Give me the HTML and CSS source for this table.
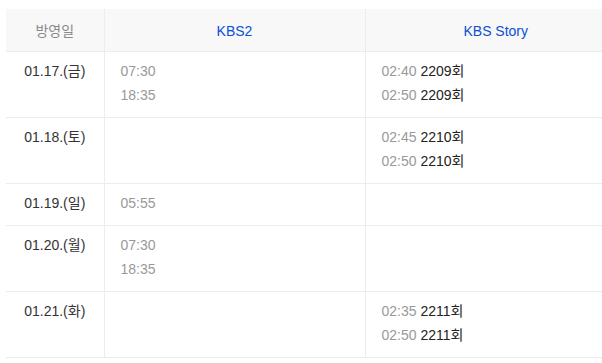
FILE: index.html
```html
<!DOCTYPE html>
<html lang="ko">
<head>
<meta charset="utf-8">
<link rel="stylesheet" href="styles.css">
</head>
<body>
<table class="sched">
  <colgroup>
    <col class="c-date">
    <col class="c-ch1">
    <col class="c-ch2">
  </colgroup>
  <thead>
    <tr>
      <th class="h-date">방영일</th>
      <th class="h-ch">KBS2</th>
      <th class="h-ch">KBS Story</th>
    </tr>
  </thead>
  <tbody>
    <tr>
      <td class="date">01.17.(금)</td>
      <td class="slot"><div class="ln"><span class="tm">07:30</span></div><div class="ln"><span class="tm">18:35</span></div></td>
      <td class="slot"><div class="ln"><span class="tm">02:40</span> <span class="ep">2209회</span></div><div class="ln"><span class="tm">02:50</span> <span class="ep">2209회</span></div></td>
    </tr>
    <tr>
      <td class="date">01.18.(토)</td>
      <td class="slot"></td>
      <td class="slot"><div class="ln"><span class="tm">02:45</span> <span class="ep">2210회</span></div><div class="ln"><span class="tm">02:50</span> <span class="ep">2210회</span></div></td>
    </tr>
    <tr>
      <td class="date">01.19.(일)</td>
      <td class="slot"><div class="ln"><span class="tm">05:55</span></div></td>
      <td class="slot"></td>
    </tr>
    <tr>
      <td class="date">01.20.(월)</td>
      <td class="slot"><div class="ln"><span class="tm">07:30</span></div><div class="ln"><span class="tm">18:35</span></div></td>
      <td class="slot"></td>
    </tr>
    <tr>
      <td class="date">01.21.(화)</td>
      <td class="slot"></td>
      <td class="slot"><div class="ln"><span class="tm">02:35</span> <span class="ep">2211회</span></div><div class="ln"><span class="tm">02:50</span> <span class="ep">2211회</span></div></td>
    </tr>
  </tbody>
</table>
</body>
</html>
```
FILE: styles.css
```css
html, body {
  margin: 0;
  padding: 0;
  background: #fff;
  overflow: hidden;
}
body {
  padding: 9px 0 0 6px;
  font-family: "Liberation Sans", Arial, "Noto Sans CJK KR", sans-serif;
  font-size: 14px;
  color: #333;
}
.sched {
  width: 620px;
  border-collapse: collapse;
  table-layout: fixed;
}
.c-date { width: 98px; }
.c-ch1 { width: 261px; }
.c-ch2 { width: 261px; }
.sched th,
.sched td {
  padding: 7px 16px 10px;
  line-height: 24px;
  border-bottom: 1px solid #ececec;
  vertical-align: top;
  font-weight: normal;
}
.sched th + th,
.sched td + td {
  border-left: 1px solid #ececec;
}
.sched thead th {
  background: #f8f8f8;
  text-align: center;
  padding-top: 10px;
  padding-bottom: 8px;
}
.h-date {
  color: #8a8a8a;
}
.h-ch {
  color: #0a4fd6;
}
.date {
  text-align: center;
  color: #333;
  padding-left: 0;
  padding-right: 0;
}
.slot {
  text-align: left;
}
.tm {
  color: #999;
}
.ep {
  color: #222;
}
```
